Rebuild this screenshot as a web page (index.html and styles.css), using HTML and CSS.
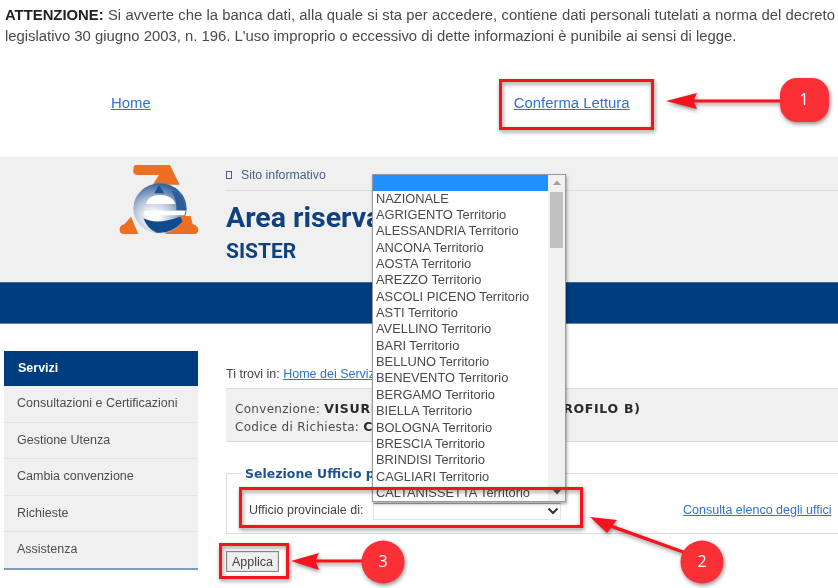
FILE: index.html
```html
<!DOCTYPE html>
<html lang="it">
<head>
<meta charset="utf-8">
<title>Area riservata SISTER</title>
<link rel="stylesheet" href="styles.css">
</head>
<body>
<div class="page">
  <p class="notice"><b>ATTENZIONE:</b> Si avverte che la banca dati, alla quale si sta per accedere, contiene dati personali tutelati a norma del decreto legislativo 30 giugno 2003, n. 196. L'uso improprio o eccessivo di dette informazioni è punibile ai sensi di legge.</p>
  <div class="toplinks">
    <a class="home-link" href="#">Home</a>
    <a class="confirm-link" href="#">Conferma Lettura</a>
  </div>
  <header class="masthead">
    <svg class="logo" width="90" height="80" viewBox="0 0 270 240">
      <defs>
        <radialGradient id="ring" cx="0.38" cy="0.68" r="0.78">
          <stop offset="0.12" stop-color="#ffffff"/>
          <stop offset="0.5" stop-color="#aebcd4"/>
          <stop offset="0.8" stop-color="#4a74a8"/>
          <stop offset="1" stop-color="#0f4c8e"/>
        </radialGradient>
      </defs>
      <path d="M62 15H165L194 74H113L132 45H68Q52 45 55 28Q56 15 62 15Z" fill="#ee6f22"/>
      <path d="M48 170L70 222H28Q12 222 14 206Q16 195 28 193Z" fill="#ee6f22"/>
      <path d="M188 168H226L233 192Q252 198 250 212Q248 222 235 222H150Z" fill="#ee6f22"/>
      <ellipse cx="135" cy="145" rx="80" ry="75" fill="url(#ring)"/>
      <path d="M92 132Q100 105 135 105Q172 105 182 132Z" fill="#fff"/>
      <path d="M132 75L148 100H118Z" fill="#1b4f8f"/>
      <path d="M184 96Q205 112 214 150H184Q186 120 170 92Z" fill="#2a5c9a"/>
      <path d="M88 152H212L208 166H88Z" fill="#fff"/>
      <path d="M85 175Q125 196 195 170L205 182Q170 222 125 218Q98 208 85 175Z" fill="#0f4c8e"/>
      <path d="M196 168H226L232 190H205Z" fill="#ee6f22"/>
    </svg>
    <div class="mast-text">
      <div class="site-row"><span class="site-icon"></span><span>Sito informativo</span></div>
      <h1 class="mast-title">Area riservata</h1>
      <h2 class="mast-sub">SISTER</h2>
    </div>
  </header>
  <div class="band"></div>
  <div class="body-row">
    <nav class="side">
      <div class="side-head">Servizi</div>
      <a class="side-item" href="#">Consultazioni e Certificazioni</a>
      <a class="side-item" href="#">Gestione Utenza</a>
      <a class="side-item" href="#">Cambia convenzione</a>
      <a class="side-item" href="#">Richieste</a>
      <a class="side-item" href="#">Assistenza</a>
    </nav>
    <main class="content">
      <div class="crumb">Ti trovi in: <a href="#">Home dei Servizi</a></div>
      <div class="info">
        <div>Convenzione: <b>VISURE CATASTALI E TAVOLE (PROFILO B)</b></div>
        <div>Codice di Richiesta: <b>C</b></div>
      </div>
      <fieldset class="office">
        <legend>Selezione Ufficio provinciale</legend>
        <div class="office-row">
          <span class="office-label">Ufficio provinciale di:</span>
          <span class="select">
            <svg width="12" height="8" viewBox="0 0 12 8"><path d="M1.500 1.500L6 6L10.500 1.500" fill="none" stroke="#333" stroke-width="2"/></svg>
          </span>
          <a class="office-link" href="#">Consulta elenco degli uffici</a>
        </div>
      </fieldset>
      <button class="apply" type="button">Applica</button>
    </main>
  </div>

  <div class="dropdown">
    <div class="drop-list">
      <div class="drop-sel"></div>
      <div class="drop-item">NAZIONALE</div>
      <div class="drop-item">AGRIGENTO Territorio</div>
      <div class="drop-item">ALESSANDRIA Territorio</div>
      <div class="drop-item">ANCONA Territorio</div>
      <div class="drop-item">AOSTA Territorio</div>
      <div class="drop-item">AREZZO Territorio</div>
      <div class="drop-item">ASCOLI PICENO Territorio</div>
      <div class="drop-item">ASTI Territorio</div>
      <div class="drop-item">AVELLINO Territorio</div>
      <div class="drop-item">BARI Territorio</div>
      <div class="drop-item">BELLUNO Territorio</div>
      <div class="drop-item">BENEVENTO Territorio</div>
      <div class="drop-item">BERGAMO Territorio</div>
      <div class="drop-item">BIELLA Territorio</div>
      <div class="drop-item">BOLOGNA Territorio</div>
      <div class="drop-item">BRESCIA Territorio</div>
      <div class="drop-item">BRINDISI Territorio</div>
      <div class="drop-item">CAGLIARI Territorio</div>
      <div class="drop-item">CALTANISSETTA Territorio</div>
    </div>
    <div class="drop-bar">
      <svg class="bar-arrow" width="16" height="16" viewBox="0 0 16 16"><path d="M4 10L8 5.500L12 10Z" fill="#a0a0a0"/></svg>
      <div class="bar-thumb"></div>
      <svg class="bar-arrow bar-down" width="16" height="16" viewBox="0 0 16 16"><path d="M4 6L8 10.500L12 6Z" fill="#555"/></svg>
    </div>
  </div>

  <svg class="marks" width="838" height="588" viewBox="0 0 838 588">
    <g fill="none" stroke="#f5141c" stroke-width="3">
      <rect x="500.500" y="80.500" width="152" height="48"/>
      <rect x="240.500" y="488.500" width="341" height="38"/>
      <rect x="220.500" y="544.500" width="67" height="33"/>
    </g>
    <g fill="#f5141c" stroke="none">
      <path d="M666 101L697 93L694 99.500H782V102.500H694L697 109Z"/>
      <path d="M590 517L617 520L613 525L685 551L684 554L611 528L607 533Z"/>
      <path d="M291 561L319 553L316 559.500H364V562.500H316L319 570Z"/>
    </g>
    <g fill="#fb3037">
      <rect x="780" y="78" width="49" height="44" rx="17"/>
      <circle cx="702" cy="562" r="21.500"/>
      <circle cx="383" cy="562" r="21.500"/>
    </g>
    <g class="mark-num">
      <text x="804" y="105">1</text>
      <text x="702" y="567">2</text>
      <text x="383" y="567">3</text>
    </g>
  </svg>
</div>
</body>
</html>
```
FILE: styles.css
```css
* { box-sizing: border-box; }
html, body { margin: 0; padding: 0; background: #fff; }
body {
  font-family: "Liberation Sans", Arial, sans-serif;
  color: #444;
  overflow: hidden;
}
.page {
  position: relative;
  width: 838px;
  height: 588px;
  overflow: hidden;
  filter: blur(0.45px);
}
a { color: #2f74d0; }

.notice {
  margin: 0;
  padding: 5px 3px 0 5px;
  width: 838px;
  font-size: 14.850px;
  line-height: 21px;
  height: 47px;
  text-align: justify;
  color: #4a4a4a;
}
.notice b { color: #222; }

.toplinks {
  height: 110px;
  padding: 47px 0 0 111px;
  font-size: 14.900px;
  line-height: 18px;
  display: flex;
}
.confirm-link { margin-left: 363px; }

.masthead {
  height: 125px;
  background: #f0f0f0;
  display: flex;
  padding: 3px 0 0 115px;
}
.logo { flex: none; }
.mast-text { flex: 1; margin-left: 21px; padding-top: 3px; }
.site-row {
  display: flex;
  align-items: center;
  gap: 9px;
  font-size: 12.300px;
  color: #4a6088;
  border-bottom: 1px solid #dcdcdc;
  padding-bottom: 4px;
  height: 28px;
}
.site-icon {
  width: 6px;
  height: 8px;
  border: 1px solid #4a6088;
  flex: none;
}
.mast-title {
  margin: 11px 0 0;
  font-family: "Roboto", sans-serif;
  font-size: 28.500px;
  line-height: 32px;
  font-weight: 700;
  color: #0f417f;
  white-space: nowrap;
}
.mast-sub {
  margin: 5px 0 0;
  font-family: "Roboto", sans-serif;
  font-size: 21px;
  line-height: 24px;
  font-weight: 700;
  color: #0f417f;
}
.band {
  height: 42px;
  background: #003d7e;
  border-top: 1px solid #3d6a9e;
  border-bottom: 1px solid #5f86b0;
}

.body-row { display: flex; padding: 27px 0 0 4px; }
.side { width: 194px; flex: none; border-bottom: 2px solid #7d9cbd; background: #f0f0f0; height: 219px; }
.side-head {
  height: 35px;
  background: #003d7e;
  color: #fff;
  font-weight: 700;
  font-size: 12.500px;
  line-height: 34px;
  padding-left: 14px;
}
.side-item {
  display: block;
  height: 36.500px;
  line-height: 35px;
  padding-left: 13px;
  font-size: 12.500px;
  color: #4d4d4d;
  text-decoration: none;
  border-bottom: 1px solid #e2e2e2;
}
.side-item:last-child { border-bottom: 0; }

.content { flex: none; width: 640px; margin-left: 28px; margin-right: -30px; }
.crumb { font-size: 12.500px; line-height: 16px; margin-top: 15px; height: 22px; color: #444; }
.info {
  height: 54px;
  background: #f0f0f0;
  border-top: 1px solid #dcdcdc;
  border-bottom: 1px solid #dcdcdc;
  padding: 11px 0 0 9px;
  font-family: "DejaVu Sans", sans-serif;
  font-size: 12px;
  line-height: 18px;
  letter-spacing: 0.3px;
  color: #4d4d4d;
  white-space: nowrap;
}
.info b { color: #2a2a2a; font-size: 12.500px; letter-spacing: 0.7px; }
.office {
  margin: 24px 0 0;
  padding: 0 0 0 22px;
  height: 68px;
  border: 1px solid #dcdcdc;
  min-width: 0;
}
.office legend {
  margin-left: -7px;
  padding: 0 3px;
  font-family: "DejaVu Sans", sans-serif;
  font-weight: 700;
  font-size: 12.500px;
  color: #1c548f;
}
.office-row { display: flex; align-items: center; font-size: 12.500px; height: 20px; margin-top: 19px; }
.office-label { width: 124px; flex: none; }
.select {
  width: 188px;
  height: 17px;
  margin-top: 2px;
  flex: none;
  background: #fff;
  border: 1px solid #e4e4e4;
  border-top-color: #aaa;
  display: flex;
  align-items: center;
  justify-content: flex-end;
  padding-right: 1px;
}
.office-link { margin-left: 122px; white-space: nowrap; }
.apply {
  display: block;
  margin-top: 17px;
  width: 53px;
  height: 21px;
  padding: 0;
  font: 12.500px "Liberation Sans", Arial, sans-serif;
  color: #444;
  background: #efefef;
  border: 1px solid #8a8a8a;
  box-shadow: inset 0 0 0 1px #ddd;
}

.dropdown {
  position: absolute;
  left: 372px;
  top: 174px;
  width: 194px;
  height: 328px;
  display: flex;
  background: #fff;
  border: 1px solid #999;
  box-shadow: 1px 2px 3px rgba(0,0,0,.35);
  overflow: hidden;
}
.drop-list { flex: 1; min-width: 0; }
.drop-sel { height: 16px; background: #1e90ff; margin-bottom: -0.5px; }
.drop-item {
  height: 16.360px;
  line-height: 16px;
  padding-left: 3px;
  font-size: 12.850px;
  color: #4a4a4a;
  white-space: nowrap;
}
.drop-bar { width: 17px; flex: none; background: #f1f1f1; position: relative; }
.bar-arrow { display: block; margin-left: 1px; }
.bar-thumb { width: 13px; height: 56px; margin: 1px 0 0 2px; background: #c1c1c1; }
.bar-down { position: absolute; left: 0; bottom: 1px; }

.marks {
  position: absolute;
  left: 0;
  top: 0;
  filter: drop-shadow(1px 2px 2px rgba(0,0,0,.45));
}
.mark-num text {
  font-family: "Open Sans", sans-serif;
  font-size: 16px;
  fill: #fff;
  text-anchor: middle;
}
```
